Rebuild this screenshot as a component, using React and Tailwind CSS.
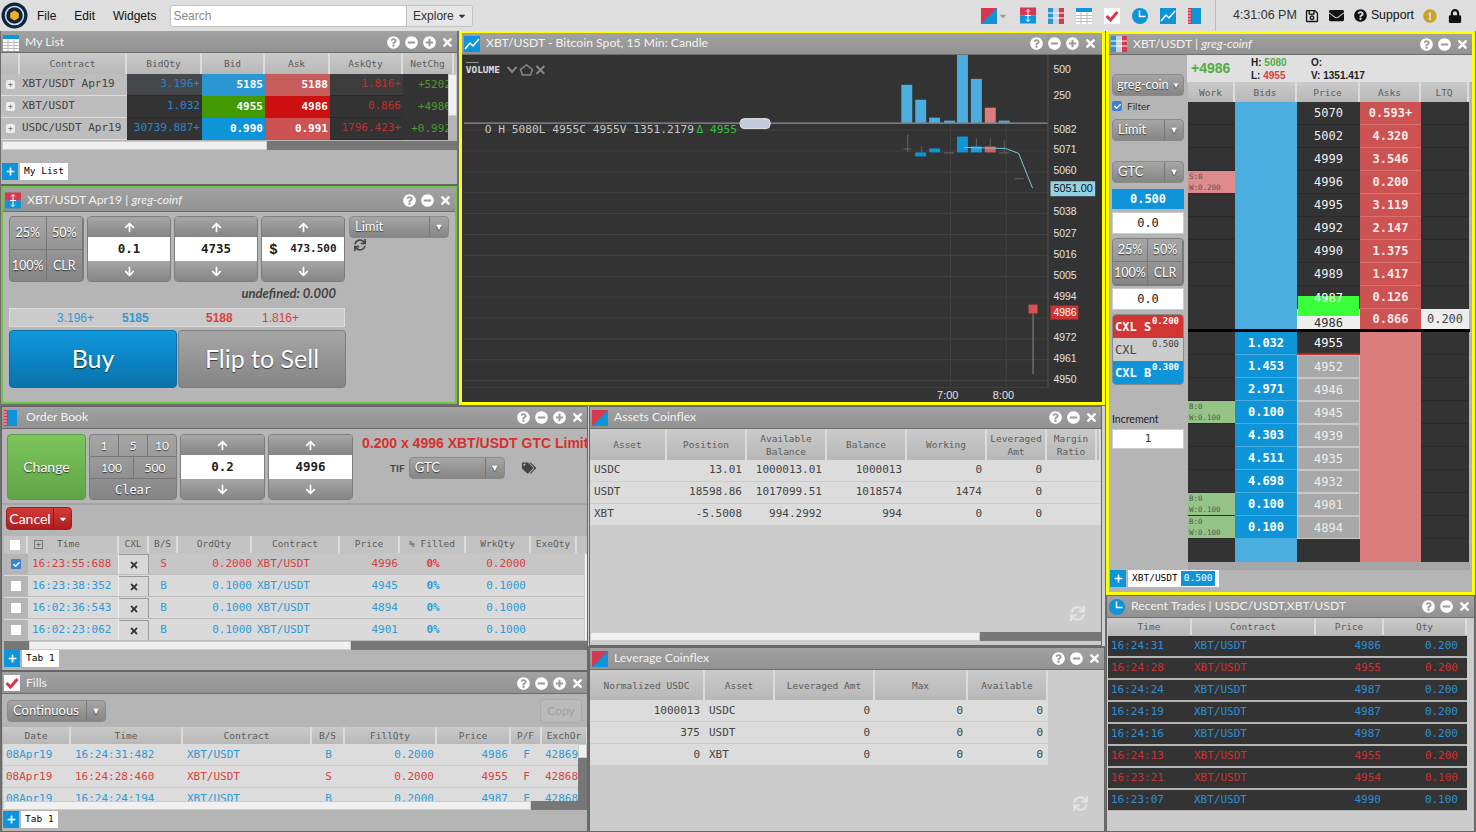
import React from 'react';
import { FaQuestionCircle, FaMinusCircle, FaPlusCircle, FaTimes, FaArrowUp, FaArrowDown, FaSync, FaTags, FaRegSave, FaEnvelope, FaExclamationCircle, FaLock, FaCheck, FaCaretDown, FaPlus } from 'react-icons/fa';

const MONO = "font-['DejaVu_Sans_Mono',monospace]";
const ARIAL = "font-['Liberation_Sans',sans-serif]";
const BTN = "bg-linear-to-b from-[#a6a6a6] to-[#858585] text-white [text-shadow:0_1px_1px_#333]";
const BLUE = 'text-[#2e9ad6]';
const RED = 'text-[#d8413f]';

// 창 아이콘들
const IconDiag = ({ s = 16 }) => (
    <svg width={s} height={s} viewBox="0 0 16 16"><rect width="16" height="16" fill="#0e94d8" /><path d="M0 0h16L0 16z" fill="#d7374f" /></svg>
);
const IconTicket = () => (
    <svg width="16" height="17" viewBox="0 0 16 16"><rect width="16" height="8" fill="#d7374f" /><rect y="8" width="16" height="8" fill="#0e94d8" /><path d="M8 2v12M6 4l2-2 2 2M6 12l2 2 2-2M5 8h6" stroke="#fff" fill="none" /></svg>
);
const IconDom = () => (
    <svg width="16" height="16" viewBox="0 0 16 16"><rect width="5" height="16" fill="#2f95d0" /><rect x="5" width="6" height="16" fill="#c9d4de" /><rect x="11" width="5" height="16" fill="#d7374f" /><path d="M0 5h16M0 10h16" stroke="#fff" /></svg>
);
const IconList = () => (
    <svg width="16" height="16" viewBox="0 0 16 16"><rect width="16" height="16" fill="#fff" /><rect width="16" height="4" fill="#0e94d8" /><path d="M0 7.5h16M0 10.5h16M0 13.5h16M5 4v12M11 4v12" stroke="#bbb" /></svg>
);
const IconCheck = () => (
    <svg width="16" height="16" viewBox="0 0 16 16"><rect width="16" height="16" fill="#fff" /><path d="M2.5 8l4 4 7-8" stroke="#d7374f" strokeWidth="3" fill="none" /></svg>
);
const IconClock = () => (
    <svg width="16" height="16" viewBox="0 0 16 16"><circle cx="8" cy="8" r="8" fill="#0e94d8" /><path d="M7.5 2.5v6h6" stroke="#fff" strokeWidth="1.5" fill="none" /></svg>
);
const IconChart = () => (
    <svg width="16" height="16" viewBox="0 0 16 16"><rect width="16" height="16" fill="#0e94d8" /><path d="M1 13l5-6 3 3 6-7" stroke="#fff" strokeWidth="1.5" fill="none" /></svg>
);
const IconBook = () => (
    <svg width="15" height="16" viewBox="0 0 15 16"><rect width="4" height="16" fill="#d7374f" /><rect x="4" width="9" height="16" fill="#0e94d8" /><path d="M0 2h3M0 5h3M0 8h3M0 11h3M0 14h3" stroke="#fff" strokeWidth=".7" /></svg>
);
const Logo = () => (
    <svg width="27" height="27" viewBox="0 0 27 27">
        <circle cx="13.5" cy="13.5" r="13" fill="#10233f" />
        <circle cx="13.5" cy="13.5" r="9" fill="none" stroke="#d8dde3" strokeWidth="1.5" />
        <circle cx="13.5" cy="13.5" r="6.5" fill="#10233f" />
        <path d="M13.5 8.5l4.3 2.5v5l-4.3 2.5-4.3-2.5v-5z" fill="#eeb024" />
    </svg>
);

// 공통 창 컴포넌트
function Window({ icon, title, plus = true, className = '', head = 'h-[22px]', pr = 'pr-[3px]', children }) {
    return (
        <div className={`flex flex-col overflow-hidden ${className}`}>
            <div className={`flex shrink-0 items-center bg-linear-to-b from-[#a2a2a2] to-[#929292] border-b border-[#6d6d6d] pl-[2px] ${head} ${pr}`}>
                <span className="mr-[5px] flex w-[17px] shrink-0 items-center">{icon}</span>
                <span className="flex-1 truncate text-[12.2px] text-[#f2f2f2]">{title}</span>
                <div className="flex items-center gap-[5px] text-[13px] text-white">
                    <FaQuestionCircle />
                    <FaMinusCircle />
                    {plus && <FaPlusCircle />}
                    <FaTimes />
                </div>
            </div>
            {children}
        </div>
    );
}

function SelectBox({ label, className = '', arrow = 'w-[19px]' }) {
    return (
        <div className={`flex h-[22px] items-stretch rounded-[4px] border border-[#8a8a8a] text-[13px] ${BTN} ${className}`}>
            <span className="flex flex-1 items-center pl-[5px]">{label}</span>
            <span className={`flex items-center justify-center border-l border-[#777] text-[9px] ${arrow}`}>▼</span>
        </div>
    );
}

function Spin({ value, w = 'w-[84px]', prefix }) {
    return (
        <div className={`flex h-[66px] flex-col overflow-hidden rounded-[4px] border border-[#7d7d7d] ${w}`}>
            <div className={`flex h-[20px] items-center justify-center text-[11px] ${BTN}`}><FaArrowUp /></div>
            <div className={`flex h-[24px] items-center justify-center bg-white font-bold text-[#222] ${MONO} ${prefix ? 'text-[11px]' : 'text-[12.5px]'}`}>
                {prefix && <span className={`mr-[13px] text-[14px] ${ARIAL}`}>{prefix}</span>}
                {value}
            </div>
            <div className={`flex flex-1 items-center justify-center text-[11px] ${BTN}`}><FaArrowDown /></div>
        </div>
    );
}

function PctGrid({ className = '', h = 'h-[33px]', textSize = 'text-[12.5px]' }) {
    return (
        <div className={`grid grid-cols-2 overflow-hidden rounded-[4px] border border-[#7d7d7d] ${textSize} ${BTN} ${className}`}>
            {['25%', '50%', '100%', 'CLR'].map(t => (
                <div key={t} className={`flex items-center justify-center border-[#777] border-r border-b ${h}`}>{t}</div>
            ))}
        </div>
    );
}

function TabBar({ tab, className = '', inner }) {
    return (
        <div className={`flex items-center gap-[2px] ${className}`}>
            <div className="flex h-[17px] w-[16px] items-center justify-center bg-[#0e94d8] text-[9px] text-white"><FaPlus /></div>
            <div className={`flex h-[17px] items-center bg-white px-[4px] text-[9.5px] text-black ${MONO}`}>{tab}{inner}</div>
        </div>
    );
}

function HScroll({ left, thumb, className = '' }) {
    return (
        <div className={`flex h-[9px] shrink-0 bg-[#777] ${left} ${className}`}>
            <div className={`h-full border border-[#ccc] bg-[#f0f0f0] ${thumb}`} />
        </div>
    );
}

// 테이블 헤더 (열 너비는 grid 템플릿으로 전달)
function HeadRow({ cols, labels, className = 'h-[18px]' }) {
    return (
        <div className={`grid shrink-0 bg-[#c2c2c2] text-[9.5px] text-[#5c5c5c] ${MONO} ${cols} ${className}`}>
            {labels.map((l, i) => (
                <div key={i} className="flex items-center justify-center overflow-hidden whitespace-pre-line border-r-2 border-[#dcdcdc] bg-linear-to-b from-[#cacaca] to-[#b8b8b8] text-center leading-[13px]">{l}</div>
            ))}
        </div>
    );
}

const myListRows = [
    ['XBT/USDT Apr19', '3.196+', '5185', '5188', '1.816+', '+5202', 'bg-[#45474a]', 'bg-[#2a97d2]', 'bg-[#c75c5c]', 'bg-[#3c3c3c]'],
    ['XBT/USDT', '1.032', '4955', '4986', '0.866', '+4986', 'bg-[#333]', 'bg-[#429a00]', 'bg-[#cc1010]', 'bg-[#333]'],
    ['USDC/USDT Apr19', '30739.887+', '0.990', '0.991', '1796.423+', '+0.992', 'bg-[#333]', 'bg-[#0e94d8]', 'bg-[#cd5252]', 'bg-[#333]'],
];

function MyList() {
    const cols = 'grid-cols-[19px_107px_75px_63px_65px_73px_51px]';
    return (
        <Window icon={<IconList />} title="My List" head="h-[22px] pt-[2px]" className="h-[155px] ml-[1px] bg-[#b5b5b5] border-b-2 border-[#666]">
            <div className="relative h-[88px] shrink-0 overflow-hidden">
                <HeadRow cols={cols} labels={['', 'Contract', 'BidQty', 'Bid', 'Ask', 'AskQty', 'NetChg']} className="h-[21px]" />
                {myListRows.map(r => (
                    <div key={r[0]} className={`grid h-[22px] text-[11px] ${MONO} ${cols}`}>
                        <div className="flex items-center justify-center border-b border-[#ddd] bg-[#bdbdbd]"><span className="flex h-[9px] w-[9px] items-center justify-center rounded-[2px] bg-[#eee] text-[8px] leading-none text-[#666]">+</span></div>
                        <div className="flex items-center overflow-hidden whitespace-nowrap border-b border-[#ddd] bg-[#bdbdbd] pl-[2px] text-[11px] text-[#444]">{r[0]}</div>
                        <div className={`flex items-center justify-end pr-[2px] text-[#2a86c8] ${r[6]} border-b border-[#2a2a2a]`}>{r[1]}</div>
                        <div className={`flex items-center justify-end pr-[2px] font-bold text-white ${r[7]}`}>{r[2]}</div>
                        <div className={`flex items-center justify-end pr-[2px] font-bold text-white ${r[8]}`}>{r[3]}</div>
                        <div className={`flex items-center justify-end pr-[2px] text-[#c03030] ${r[9]} border-b border-[#2a2a2a]`}>{r[4]}</div>
                        <div className="flex items-center justify-end overflow-hidden whitespace-nowrap bg-[#333] pr-[3px] text-[#4a9a35]">{r[5]}</div>
                    </div>
                ))}
                <div className="absolute right-0 top-[21px] h-[67px] w-[9px] bg-[#b5b5b5]">
                    <div className="h-[42px] border border-[#ccc] bg-[#f0f0f0]" />
                </div>
            </div>
            <HScroll left="ml-[1px]" thumb="w-[265px]" />
            <TabBar tab="My List" className="mt-[13px] ml-[1px]" />
        </Window>
    );
}

function Ticket() {
    return (
        <Window icon={<IconTicket />} title={<>XBT/USDT Apr19 | <i>greg-coinf</i></>} plus={false} head="h-[24px] pt-[1px]" className="h-[218px] ml-[1px] bg-[#b5b5b5] border-2 border-[#6cc644]">
            <div className="flex pt-[4px] pl-[6px]">
                <PctGrid className="w-[75px] h-[66px]" />
                <div className="ml-[3px] flex gap-[3px]">
                    <Spin value="0.1" />
                    <Spin value="4735" />
                    <Spin value="473.500" prefix="$" />
                </div>
                <div className="ml-[4px]">
                    <SelectBox label="Limit" className="w-[100px]" />
                    <FaSync className="mt-[1px] ml-[5px] text-[12px] text-[#444]" />
                </div>
            </div>
            <div className="mr-[119px] mt-[4px] text-right text-[13px] font-bold italic leading-[15px] text-[#444]">undefined: 0.000</div>
            <div className={`ml-[6px] mt-[7px] flex h-[19px] w-[336px] items-center border border-[#ddd] bg-[#cbcbcb] text-[12px] ${ARIAL}`}>
                <span className={`ml-[47px] w-[65px] ${BLUE}`}>3.196+</span>
                <span className={`w-[84px] font-bold ${BLUE}`}>5185</span>
                <span className={`w-[56px] font-bold ${RED}`}>5188</span>
                <span className={RED}>1.816+</span>
            </div>
            <div className="ml-[6px] mt-[3px] flex w-[337px] gap-[1px]">
                <div className="flex h-[58px] flex-1 items-center justify-center rounded-[4px] border border-[#0a6fa8] bg-linear-to-b from-[#0e98dc] to-[#0a72ac] text-[25px] text-white [text-shadow:0_1px_1px_#033]">Buy</div>
                <div className={`flex h-[58px] flex-1 items-center justify-center rounded-[4px] border border-[#7d7d7d] text-[25px] ${BTN}`}>Flip to Sell</div>
            </div>
        </Window>
    );
}

// 차트는 페이지 좌표 기준 viewBox 사용
const volBars = [
    [902, 84, '#4aaee0'], [916, 99, '#4aaee0'], [930, 117, '#4aaee0'], [945, 120, '#4aaee0'],
    [958, 54, '#4aaee0'], [972, 78, '#4aaee0'], [986, 107, '#d97d7d'], [1000, 120, '#4aaee0'],
];
const candles = [
    [916, 152, 156, '#0e94d8'], [930, 148, 152, '#0e94d8'], [958, 136, 152, '#0e94d8'],
    [972, 146, 152, '#1aa0e0'], [986, 146, 152, '#d06060'],
];
const axis = [['500', 69], ['250', 95], ['5082', 129], ['5071', 150], ['5060', 171], ['5038', 212], ['5027', 234], ['5016', 255], ['5005', 276], ['4994', 297], ['4972', 339], ['4961', 360], ['4950', 381]];
const grid = [129, 150, 171, 192, 213, 234, 255, 276, 297, 318, 339, 360, 381];

function Chart() {
    return (
        <Window icon={<IconChart />} title="XBT/USDT - Bitcoin Spot, 15 Min: Candle" pr="pr-[5px]" className="h-[374px] w-[646px] bg-[#333] border-[3px] border-[#ffff00] !border-t-[2px]">
            <svg width="640" height="349" viewBox="462 54 640 349" className="block">
                <rect x="462" y="54" width="640" height="349" fill="#333" />
                {grid.map(y => <line key={y} x1="462" x2="1049" y1={y + .5} y2={y + .5} stroke="#444" />)}
                <line x1="951.5" x2="951.5" y1="122" y2="388" stroke="#444" />
                <line x1="1007.5" x2="1007.5" y1="122" y2="388" stroke="#444" />
                <line x1="1049.5" x2="1049.5" y1="54" y2="388" stroke="#555" />
                <line x1="462" x2="1049" y1="388.5" y2="388.5" stroke="#444" />
                {volBars.map(([x, y, c]) => <rect key={x} x={x} y={y} width="11" height={122 - y} fill={c} />)}
                <line x1="462" x2="1049" y1="122.5" y2="122.5" stroke="#a9adb8" />
                <rect x="740" y="118" width="30" height="10" rx="4" fill="#c5cadb" stroke="#e6e8ee" />
                <line x1="464" x2="477" y1="61.5" y2="61.5" stroke="#999" />
                <text x="464" y="72" fontSize="9.5" fontWeight="bold" fill="#ddd" className={MONO}>VOLUME</text>
                <path d="M506 66l4.5 5 4.5-5M535 65l8 8M543 65l-8 8" stroke="#888" strokeWidth="2" fill="none" />
                <path d="M525 64l6 4.5-2 5.5h-8l-2-5.5z" stroke="#888" strokeWidth="1.5" fill="none" />
                <text x="483" y="132" fontSize="11.3" fill="#c8c8c8" className={MONO} xmlSpace="preserve">O H 5080L 4955C 4955V 1351.2179</text>
                <text x="696" y="132" fontSize="11.3" fill="#34c23a" className={MONO} xmlSpace="preserve">Δ 4955</text>
                {/* 캔들 */}
                <path d="M908.5 134v18M904 148.5h8M922.5 146v6M935.5 148v4M945 152.5h10M977.5 138v8M991.5 138v8M1005.5 140v12M1000 152.5h11M1016 178.5h9" stroke="#666" fill="none" />
                {candles.map(([x, y1, y2, c]) => <rect key={x} x={x} y={y1} width="11" height={y2 - y1} fill={c} />)}
                <polyline points="965,147 1007,148 1020,153 1034,188" stroke="#79c6d6" fill="none" />
                <line x1="1034.5" x2="1034.5" y1="314" y2="375" stroke="#888" />
                <rect x="1030" y="305" width="9" height="9" fill="#d85050" />
                {axis.map(([t, y]) => <text key={t} x="1055" y={y + 3} fontSize="10.5" fill="#e2e2e2" className={ARIAL}>{t}</text>)}
                <rect x="1052" y="181" width="45" height="15" fill="#92d2e4" />
                <text x="1055" y="192" fontSize="11" fill="#111" className={ARIAL}>5051.00</text>
                <rect x="1052" y="306" width="28" height="14" fill="#cc3333" />
                <text x="1055" y="317" fontSize="10.5" fill="#fff" className={ARIAL}>4986</text>
                <text x="938" y="400" fontSize="11" fill="#e2e2e2" className={ARIAL}>7:00</text>
                <text x="994" y="400" fontSize="11" fill="#e2e2e2" className={ARIAL}>8:00</text>
            </svg>
        </Window>
    );
}

const orders = [
    ['16:23:55:688', 'S', '0.2000', '4996', '0.2000', true],
    ['16:23:38:352', 'B', '0.1000', '4945', '0.1000'],
    ['16:02:36:543', 'B', '0.1000', '4894', '0.1000'],
    ['16:02:23:062', 'B', '0.1000', '4901', '0.1000'],
];

function OrderBook() {
    const cols = 'grid-cols-[24px_91px_30px_29px_74px_88px_60px_66px_65px_46px]';
    return (
        <Window icon={<IconBook />} title="Order Book" className="relative h-[265px] bg-[#b5b5b5] border border-[#666] ml-[1px]">
            <div className="flex pl-[5px] pt-[5px]">
                <div className="flex h-[66px] w-[79px] shrink-0 items-center justify-center rounded-[4px] border border-[#5a9d48] bg-linear-to-b from-[#7cc55a] to-[#5fa548] pb-[2px] text-[14px] text-white [text-shadow:0_1px_1px_#333]">Change</div>
                <div className={`ml-[3px] h-[66px] w-[88px] shrink-0 overflow-hidden rounded-[4px] border border-[#7d7d7d] text-[12px] ${BTN}`}>
                    <div className="flex h-[22px] border-b border-[#777]"><span className="flex w-[29px] items-center justify-center border-r border-[#777]">1</span><span className="flex w-[29px] items-center justify-center border-r border-[#777]">5</span><span className="flex flex-1 items-center justify-center">10</span></div>
                    <div className="flex h-[22px] border-b border-[#777]"><span className="flex w-[44px] items-center justify-center border-r border-[#777]">100</span><span className="flex flex-1 items-center justify-center">500</span></div>
                    <div className={`flex h-[21px] items-center justify-center ${MONO}`}>Clear</div>
                </div>
                <div className="ml-[3px] flex shrink-0 gap-[3px]">
                    <Spin value="0.2" w="w-[85px]" />
                    <Spin value="4996" w="w-[85px]" />
                </div>
                <div className="ml-[9px] min-w-0 flex-1 overflow-hidden">
                    <div className={`whitespace-nowrap pt-[1px] text-[14px] font-bold leading-[16px] text-[#d8302c] ${ARIAL}`}>0.200 x 4996 XBT/USDT GTC Limit</div>
                    <div className="mt-[6px] flex items-center">
                        <span className="ml-[28px] mr-[4px] text-[10px] font-bold text-[#444]">TIF</span>
                        <SelectBox label="GTC" className="w-[96px]" />
                        <FaTags className="ml-[17px] text-[14px] text-[#444]" />
                    </div>
                </div>
            </div>
            <div className="mt-[3px] border-t-2 border-[#a5a5a5]" />
            <div className="ml-[4px] mt-[2px] flex h-[23px] w-[66px] items-stretch overflow-hidden rounded-[4px] border border-[#9b2020] bg-linear-to-b from-[#d43a36] to-[#ac1f1f] text-[14px] text-white">
                <span className="flex flex-1 items-center justify-center">Cancel</span>
                <span className="flex w-[18px] items-center justify-center border-l border-[#8c1818] text-[10px]"><FaCaretDown /></span>
            </div>
            <div className="relative mt-[6px] ml-[2px]">
                <div className={`grid h-[17px] bg-[#c2c2c2] text-[9.5px] text-[#5c5c5c] ${MONO} ${cols}`}>
                    <div className="flex items-center justify-center border-r-2 border-[#dcdcdc]"><span className="h-[10px] w-[10px] bg-white" /></div>
                    <div className="flex items-center border-r-2 border-[#dcdcdc] pl-[6px]"><span className="flex h-[9px] w-[9px] items-center justify-center border border-[#777] text-[8px]">+</span><span className="ml-[14px]">Time</span></div>
                    {['CXL', 'B/S', 'OrdQty', 'Contract', 'Price', '% Filled', 'WrkQty', 'ExeQty'].map(l => (
                        <div key={l} className="flex items-center justify-center overflow-hidden border-r-2 border-[#dcdcdc]">{l}</div>
                    ))}
                </div>
                {orders.map((o) => {
                    const c = o[5] ? RED : BLUE;
                    return (
                        <div key={o[0]} className={`grid h-[22px] border-b border-[#bbb] pt-[1px] text-[11px] ${MONO} ${cols} ${c} ${o[5] ? 'bg-[#c6c6c6]' : 'bg-[#dadada]'}`}>
                            <div className="flex items-center justify-center bg-[#b5b5b5]">
                                {o[5] ? <span className="flex h-[10px] w-[10px] items-center justify-center rounded-[1px] bg-[#3b82d6] text-[7px] text-white"><FaCheck /></span> : <span className="h-[10px] w-[10px] rounded-[1px] bg-white" />}
                            </div>
                            <div className="flex items-center border-r border-[#eee] pl-[4px]">{o[0]}</div>
                            <div className="flex items-center justify-center border-r border-[#999] border-t bg-[#d8d8d8] text-[10px] text-[#333]"><FaTimes /></div>
                            <div className="flex items-center justify-center">{o[1]}</div>
                            <div className="flex items-center justify-end">{o[2]}</div>
                            <div className="flex items-center pl-[5px]">XBT/USDT</div>
                            <div className="flex items-center justify-end pr-[2px]">{o[3]}</div>
                            <div className="flex items-center justify-center font-bold">0%</div>
                            <div className="flex items-center justify-end pr-[5px]">{o[4]}</div>
                            <div />
                        </div>
                    );
                })}
                <div className="absolute right-[-5px] top-[17px] h-[88px] w-[8px] border border-[#ccc] bg-[#f0f0f0]" />
            </div>
            <HScroll left="ml-[2px]" thumb="ml-[25px] w-[322px]" className="bg-[#777]" />
            <TabBar tab="Tab 1" className="ml-[2px]" />
        </Window>
    );
}

const fills = [
    ['B', '08Apr19', '16:24:31:482', '0.2000', '4986', '42869'],
    ['S', '08Apr19', '16:24:28:460', '0.2000', '4955', '42868'],
    ['B', '08Apr19', '16:24:24:194', '0.2000', '4987', '42868'],
];

function Fills() {
    const cols = 'grid-cols-[68px_112px_129px_33px_92px_74px_31px_46px]';
    return (
        <Window icon={<IconCheck />} title="Fills" head="h-[22px] pt-[1px]" className="relative h-[161px] bg-[#b5b5b5] border border-[#666] ml-[1px]">
            <div className="flex h-[33px] shrink-0 items-center justify-between px-[5px]">
                <SelectBox label="Continuous" className="w-[99px]" />
                <div className="flex h-[24px] w-[42px] items-center justify-center rounded-[4px] border border-[#aaa] bg-[#bbb] text-[12px] text-[#a0a0a0]">Copy</div>
            </div>
            <HeadRow cols={cols} labels={['Date', 'Time', 'Contract', 'B/S', 'FillQty', 'Price', 'P/F', 'ExchOr']} className="h-[17px] ml-[1px]" />
            <div className="relative h-[57px] shrink-0 overflow-hidden ml-[1px]">
                {fills.map(f => {
                    const c = f[0] === 'S' ? RED : BLUE;
                    return (
                        <div key={f[2]} className={`grid h-[22px] border-b border-[#ccc] bg-[#dcdcdc] pt-[1px] text-[11px] ${MONO} ${cols} ${c}`}>
                            <div className="flex items-center pl-[3px]">{f[1]}</div>
                            <div className="flex items-center pl-[4px]">{f[2]}</div>
                            <div className="flex items-center pl-[4px]">XBT/USDT</div>
                            <div className="flex items-center justify-center">{f[0]}</div>
                            <div className="flex items-center justify-end pr-[3px]">{f[3]}</div>
                            <div className="flex items-center justify-end pr-[3px]">{f[4]}</div>
                            <div className="flex items-center justify-center">F</div>
                            <div className="flex items-center overflow-hidden pl-[3px]">{f[5]}</div>
                        </div>
                    );
                })}
                <div className="absolute right-0 top-0 h-full w-[9px] bg-[#777]" />
                <div className="absolute right-0 top-0 h-[14px] w-[9px] border border-[#ccc] bg-[#f0f0f0]" />
            </div>
            <HScroll left="ml-[1px]" thumb="w-[528px]" />
            <TabBar tab="Tab 1" className="mt-[1px] ml-[1px]" />
        </Window>
    );
}

const assets = [
    ['USDC', '13.01', '1000013.01', '1000013', '0', '0'],
    ['USDT', '18598.86', '1017099.51', '1018574', '1474', '0'],
    ['XBT', '-5.5008', '994.2992', '994', '0', '0'],
];

function Assets() {
    const cols = 'grid-cols-[77px_80px_80px_80px_80px_60px_50px_1fr]';
    return (
        <div className="h-[240px] shrink-0 bg-[#d0d0d0] pr-[3px]">
            <Window icon={<IconDiag />} title="Assets Coinflex" plus={false} className="h-[240px] bg-[#ccc] border border-[#666] ml-[1px]">
                <HeadRow cols={cols} labels={['Asset', 'Position', 'Available\nBalance', 'Balance', 'Working', 'Leveraged\nAmt', 'Margin\nRatio', '']} className="h-[31px]" />
                <div className="h-[172px] shrink-0">
                    {assets.map(a => (
                        <div key={a[0]} className={`grid h-[22px] border-b border-[#ccc] bg-[#dcdcdc] text-[11px] text-[#444] ${MONO} ${cols}`}>
                            <div className="flex items-center pl-[4px]">{a[0]}</div>
                            {a.slice(1).map((v, i) => <div key={i} className="flex items-center justify-end pr-[5px]">{v}</div>)}
                            <div />
                        </div>
                    ))}
                    <div className="flex justify-end pr-[16px] pt-[80px] text-[15px] text-[#e4e4e4]"><FaSync /></div>
                </div>
                <HScroll left="" thumb="w-[390px]" />
            </Window>
        </div>
    );
}

const leverage = [['1000013', 'USDC', '0', '0', '0'], ['375', 'USDT', '0', '0', '0'], ['0', 'XBT', '0', '0', '0']];

function Leverage() {
    const cols = 'grid-cols-[115px_70px_100px_93px_80px]';
    return (
        <Window icon={<IconDiag />} title="Leverage Coinflex" plus={false} className="h-[187px] flex-1 bg-[#ccc] border border-[#666] ml-[1px]">
            <HeadRow cols={cols} labels={['Normalized USDC', 'Asset', 'Leveraged Amt', 'Max', 'Available']} className="h-[30px] w-[458px]" />
            {leverage.map(a => (
                <div key={a[1]} className={`grid h-[22px] w-[458px] border-b border-[#ccc] bg-[#dcdcdc] pt-[1px] text-[11px] text-[#444] ${MONO} ${cols}`}>
                    <div className="flex items-center justify-end pr-[5px]">{a[0]}</div>
                    <div className="flex items-center pl-[4px]">{a[1]}</div>
                    <div className="flex items-center justify-end pr-[5px]">{a[2]}</div>
                    <div className="flex items-center justify-end pr-[5px]">{a[3]}</div>
                    <div className="flex items-center justify-end pr-[5px]">{a[4]}</div>
                </div>
            ))}
            <div className="flex justify-end pr-[16px] pt-[30px] text-[15px] text-[#e4e4e4]"><FaSync /></div>
        </Window>
    );
}

const askRows = [['5070', '0.593+'], ['5002', '4.320'], ['4999', '3.546'], ['4996', '0.200'], ['4995', '3.119'], ['4992', '2.147'], ['4990', '1.375'], ['4989', '1.417']];
const bidRows = [['1.032', '4955'], ['1.453', '4952'], ['2.971', '4946'], ['0.100', '4945', 1], ['4.303', '4939'], ['4.511', '4935'], ['4.698', '4932'], ['0.100', '4901', 1], ['0.100', '4894', 1]];

const WorkTag = ({ a, b, bg }) => (
    <div className={`flex h-full flex-col justify-center pl-[1px] text-[7.5px] leading-[11px] text-[#555] ${MONO} ${bg}`}><span>{a}</span><span>{b}</span></div>
);

function Dom() {
    const cols = 'grid-cols-[47px_62px_63px_61px_48px]';
    return (
        <Window icon={<IconDom />} title={<>XBT/USDT | <i>greg-coinf</i></>} plus={false} head="h-[21px]" className="h-[564px] bg-[#b5b5b5] border-[3px] border-[#ffff00]">
            <div className="flex h-[515px] shrink-0 overflow-hidden">
                {/* 왼쪽 패널 */}
                <div className="w-[78px] shrink-0 pl-[3px] pr-[3px] pt-[19px]">
                    <div className={`flex h-[22px] items-center justify-between rounded-[4px] border border-[#8a8a8a] pl-[4px] pr-[3px] text-[12.5px] ${BTN}`}>greg-coin<span className="text-[8px]">▼</span></div>
                    <div className="mt-[3px] flex h-[14px] items-center text-[10px] text-[#333]">
                        <span className="flex h-[10px] w-[10px] items-center justify-center rounded-[2px] bg-[#3b82d6] text-[7px] text-white"><FaCheck /></span>
                        <span className="ml-[5px]">Filter</span>
                    </div>
                    <SelectBox label="Limit" className="mt-[6px]" />
                    <SelectBox label="GTC" className="mt-[20px]" />
                    <div className={`mt-[6px] flex h-[20px] items-center justify-center bg-[#0e94d8] text-[12px] font-bold text-white ${MONO}`}>0.500</div>
                    <div className={`mt-[3px] flex h-[22px] items-center justify-center border border-[#ccc] bg-white text-[12px] text-[#222] ${MONO}`}>0.0</div>
                    <PctGrid className="mt-[4px]" h="h-[23px]" />
                    <div className={`mt-[2px] flex h-[22px] items-center justify-center border border-[#ccc] bg-white text-[12px] text-[#222] ${MONO}`}>0.0</div>
                    <div className={`mt-[4px] overflow-hidden rounded-[4px] border border-[#8a8a8a] text-[12px] ${MONO}`}>
                        <div className="relative flex h-[23px] items-center bg-[#d13634] pl-[2px] font-bold text-white">CXL S<span className="absolute right-[4px] top-[0px] text-[9px]">0.200</span></div>
                        <div className="relative flex h-[23px] items-center bg-[#ccc] pl-[2px] text-[#444]">CXL<span className="absolute right-[4px] top-[0px] text-[9px]">0.500</span></div>
                        <div className="relative flex h-[23px] items-center bg-[#0e94d8] pl-[2px] font-bold text-white">CXL B<span className="absolute right-[4px] top-[0px] text-[9px]">0.300</span></div>
                    </div>
                    <div className="mt-[28px] text-[10.5px] leading-[13px] text-[#222]">Increment</div>
                    <div className={`mt-[3px] flex h-[20px] items-center justify-center border border-[#ccc] bg-white text-[11px] text-[#333] ${MONO}`}>1</div>
                </div>
                {/* 래더 */}
                <div className="flex flex-1 flex-col overflow-hidden pl-[1px] pr-[2px]">
                    <div className={`-mr-[2px] -ml-[1px] flex h-[27px] shrink-0 items-center bg-[#e0e0e0] pl-[4px] text-[10px] font-bold text-[#222] ${ARIAL}`}>
                        <span className="w-[60px] text-[14px] text-[#55ab45]">+4986</span>
                        <div className="w-[60px] leading-[13px]">
                            <div>H: <span className="text-[#55ab45]">5080</span></div>
                            <div>L: <span className="text-[#d8403f]">4955</span></div>
                        </div>
                        <div className="leading-[13px]">
                            <div>O:</div>
                            <div>V: 1351.417</div>
                        </div>
                    </div>
                    <HeadRow cols={cols} labels={['Work', 'Bids', 'Price', 'Asks', 'LTQ']} className="h-[20px]" />
                    <div className={`text-[12px] ${MONO}`}>
                        {askRows.map((r) => (
                            <div key={r[0]} className={`grid h-[23px] ${cols}`}>
                                <div className="border-b border-[#2a2a2a] bg-[#333]">{r[0] === '4996' && <WorkTag a="S:0" b="W:0.200" bg="bg-[#df8a8c]" />}</div>
                                <div className="bg-[#4aaee0]" />
                                <div className="flex items-center justify-center border-b border-[#2a2a2a] bg-[#333] text-[#eee]">{r[0]}</div>
                                <div className="flex items-center justify-center border-b border-[#d87070] bg-[#cd5252] font-bold text-[#f6eaea]">{r[1]}</div>
                                <div className="border-b border-[#2a2a2a] bg-[#333]" />
                            </div>
                        ))}
                        <div className={`grid h-[23px] ${cols}`}>
                            <div className="bg-[#333]" /><div className="bg-[#4aaee0]" />
                            <div className="relative bg-[#333]"><div className="absolute inset-x-[1px] bottom-0 h-[13px] bg-[#3aff3a]" /><span className="relative flex h-full items-center justify-center text-white">4987</span></div>
                            <div className="flex items-center justify-center border-b border-[#d87070] bg-[#cd5252] font-bold text-[#f6eaea]">0.126</div>
                            <div className="bg-[#333]" />
                        </div>
                        <div className={`grid h-[23px] ${cols} border-b-[3px] border-black`}>
                            <div className="bg-[#333]" /><div className="bg-[#4aaee0]" />
                            <div className="bg-[#eeeeee]"><div className="h-[7px] bg-[#3aff3a] mx-[1px]" /><div className="flex h-[13px] items-center justify-center text-[#333]">4986</div></div>
                            <div className="flex items-center justify-center bg-[#cd5252] font-bold text-[#f6eaea]">0.866</div>
                            <div className="flex items-center justify-center bg-[#eee] text-[#444]">0.200</div>
                        </div>
                        {bidRows.map((r, i) => (
                            <div key={r[1]} className={`grid h-[23px] ${cols}`}>
                                <div className="border-b border-[#2a2a2a] bg-[#333]">{r[2] && <WorkTag a="B:0" b="W:0.100" bg="bg-[#95c586]" />}</div>
                                <div className="flex items-center justify-center border-b border-[#4aaee0] bg-[#0e94d8] font-bold text-white">{r[0]}</div>
                                {i === 0
                                    ? <div className="flex items-center justify-center border-b-2 border-[#cc1f1f] bg-[#333] text-white">{r[1]}</div>
                                    : <div className="flex items-center justify-center border border-[#c8c8c8] bg-[#a8a8a8] text-[#eee]">{r[1]}</div>}
                                <div className="bg-[#d97d7d]" />
                                <div className="border-b border-[#2a2a2a] bg-[#333]" />
                            </div>
                        ))}
                        <div className={`grid h-[23px] ${cols}`}>
                            <div className="bg-[#333]" /><div className="bg-[#4aaee0]" /><div className="bg-[#333]" /><div className="bg-[#d97d7d]" /><div className="bg-[#333]" />
                        </div>
                    </div>
                    <div className="h-[8px] shrink-0 bg-[#a6a6a6]" />
                </div>
            </div>
            <TabBar tab="XBT/USDT" className="ml-[1px] h-[22px] shrink-0 pb-[5px]" inner={<span className="ml-[3px] bg-[#0e94d8] px-[3px] text-white">0.500</span>} />
        </Window>
    );
}

const trades = [
    ['16:24:31', '4986', '0.200', 'b'], ['16:24:28', '4955', '0.200', 'r'], ['16:24:24', '4987', '0.200', 'b'], ['16:24:19', '4987', '0.200', 'b'],
    ['16:24:16', '4987', '0.200', 'b'], ['16:24:13', '4955', '0.200', 'r'], ['16:23:21', '4954', '0.100', 'r'], ['16:23:07', '4990', '0.100', 'b'],
];

function RecentTrades() {
    const cols = 'grid-cols-[84px_124px_68px_83px]';
    return (
        <Window icon={<IconClock />} title="Recent Trades | USDC/USDT,XBT/USDT" plus={false} className="flex-1 bg-[#ccc] border border-[#666]">
            <div className="w-[360px] pl-[1px]">
                <HeadRow cols={cols} labels={['Time', 'Contract', 'Price', 'Qty']} className="h-[17px]" />
                {trades.map(t => (
                    <div key={t[0]} className={`grid h-[22px] border-y border-[#b5b5b5] bg-[#333] text-[11px] ${MONO} ${cols} ${t[3] === 'b' ? 'text-[#2c8fd8]' : 'text-[#c83232]'}`}>
                        <div className="flex items-center pl-[3px]">{t[0]}</div>
                        <div className="flex items-center pl-[2px]">XBT/USDT</div>
                        <div className="flex items-center justify-end pr-[3px]">{t[1]}</div>
                        <div className="flex items-center justify-end pr-[9px]">{t[2]}</div>
                    </div>
                ))}
            </div>
        </Window>
    );
}

function TopBar() {
    return (
        <div className={`flex h-[31px] shrink-0 items-center bg-[#dedede] pl-[1px] pr-[14px] text-[12px] text-[#111] ${ARIAL}`}>
            <Logo />
            <span className="ml-[9px]">File</span>
            <span className="ml-[18px]">Edit</span>
            <span className="ml-[18px]">Widgets</span>
            <div className="ml-[14px] flex h-[22px] w-[303px] overflow-hidden rounded-[3px] border border-[#c2c2c2]">
                <div className="flex flex-1 items-center bg-white pl-[2px] text-[#8a8a8a]">Search</div>
                <div className="flex w-[66px] items-center justify-center gap-[3px] border-l border-[#c2c2c2] bg-[#e6e6e6] text-[#333]">Explore<FaCaretDown className="text-[10px]" /></div>
            </div>
            <div className="flex-1" />
            <div className="flex items-center gap-[12px]">
                <div className="flex items-center"><IconDiag s={16} /><FaCaretDown className="ml-[1px] text-[10px] text-[#999]" /></div>
                <IconTicket />
                <IconDom />
                <IconList />
                <IconCheck />
                <IconClock />
                <IconChart />
                <IconBook />
            </div>
            <div className="ml-[12px] flex h-full items-center border-l border-[#bcbcbc] pl-[17px]">
                <span className="w-[62px] whitespace-nowrap text-[12.5px] text-[#333]">4:31:06 PM</span>
                <FaRegSave className="ml-[10px] text-[14px]" />
                <FaEnvelope className="ml-[10px] text-[15px]" />
                <FaQuestionCircle className="ml-[10px] text-[13px]" />
                <span className="ml-[4px] text-[12.3px]">Support</span>
                <FaExclamationCircle className="ml-[9px] text-[14px] text-[#c9a227]" />
                <FaLock className="ml-[11px] text-[14px]" />
            </div>
        </div>
    );
}

export default function App() {
    return (
        <div className="flex h-[832px] w-[1476px] flex-col overflow-hidden bg-[#6e6e6e] font-['Lato',sans-serif]">
            <TopBar />
            <div className="flex flex-1 overflow-hidden">
                <div className="flex w-[1105px] shrink-0 flex-col">
                    <div className="flex h-[374px] shrink-0">
                        <div className="flex w-[459px] shrink-0 flex-col pr-[2px]">
                            <MyList />
                            <Ticket />
                        </div>
                        <Chart />
                    </div>
                    <div className="flex flex-1 pt-[1px]">
                        <div className="flex w-[588px] shrink-0 flex-col">
                            <OrderBook />
                            <Fills />
                        </div>
                        <div className="flex flex-1 flex-col gap-[1px]">
                            <Assets />
                            <Leverage />
                        </div>
                    </div>
                </div>
                <div className="flex w-[371px] flex-col pl-[1px] pr-[1px]">
                    <Dom />
                    <RecentTrades />
                </div>
            </div>
        </div>
    );
}
